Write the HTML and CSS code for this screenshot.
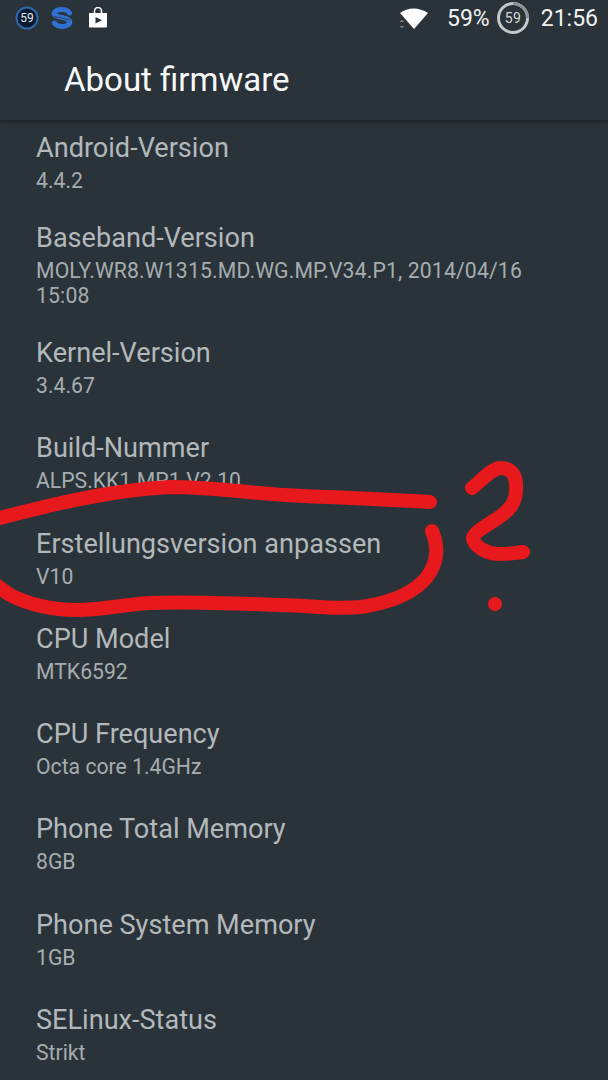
FILE: index.html
```html
<!DOCTYPE html>
<html lang="en">
<head>
  <meta charset="UTF-8">
  <title>About firmware</title>
  <link rel="stylesheet" href="styles.css">
</head>
<body>

  <div class="status-bar">
    <div class="status-left">
      <svg class="icon-badge" width="24" height="24" viewBox="0 0 24 24">
        <circle cx="12" cy="12" r="10.500" fill="#0a1a33" stroke="#2c6aa8" stroke-width="2"/>
        <text x="12" y="16.200" text-anchor="middle" class="badge-text">59</text>
      </svg>
      <svg class="icon-s" width="24" height="24" viewBox="0 0 24 24">
        <path d="M19.500 7C17 2.500 7 2.500 4.500 6.500C3 10 8 10.500 12 11.500C16 12.500 21 13.500 19.500 17.500C17 21.500 7 21.500 4.500 17" fill="none" stroke="#2f72d4" stroke-width="5" stroke-linecap="round"/>
        <path d="M4 10.500C9 11.500 15 12.500 20 14" fill="none" stroke="#2a3339" stroke-width="0.800"/>
      </svg>
      <svg class="icon-bag" width="20" height="22" viewBox="0 0 20 22">
        <path d="M1 6h18v13.500a1 1 0 0 1-1 1H2a1 1 0 0 1-1-1z" fill="#fff"/>
        <path d="M6.500 6V4a3.500 3.500 0 0 1 7 0v2" fill="none" stroke="#fff" stroke-width="1.600"/>
        <path d="M7.500 10l6.500 3.300-6.500 3.300z" fill="#2a3339"/>
      </svg>
    </div>
    <div class="status-right">
      <svg class="icon-wifi" width="30" height="24" viewBox="0 0 30 24">
        <path d="M1 7C9 1 20 1 29 7L15 23z" fill="#fff"/>
        <path d="M1.500 16l1.500-1.500 1.500 1.500M1.500 20l1.500 1.500 1.500-1.500" fill="none" stroke="#c9d0d2" stroke-width="0.900"/>
      </svg>
      <span class="status-text battery">59%</span>
      <svg class="icon-ring" width="34" height="34" viewBox="0 0 34 34">
        <circle cx="17" cy="17" r="14.500" fill="none" stroke="#c4c8c8" stroke-width="3"/>
        <path d="M17 2.500A14.500 14.500 0 0 1 31.500 17" fill="none" stroke="#8d9497" stroke-width="3"/>
        <text x="17" y="21.500" text-anchor="middle" class="ring-text">59</text>
      </svg>
      <span class="status-text clock">21:56</span>
    </div>
  </div>

  <div class="toolbar">
    <h1>About firmware</h1>
  </div>

  <div class="list">
    <div class="item item-tight">
      <div class="item-title">Android-Version</div>
      <div class="item-value">4.4.2</div>
    </div>
    <div class="item item-tight">
      <div class="item-title">Baseband-Version</div>
      <div class="item-value item-value-long">MOLY.WR8.W1315.MD.WG.MP.V34.P1, 2014/04/16 15:08</div>
    </div>
    <div class="item">
      <div class="item-title">Kernel-Version</div>
      <div class="item-value">3.4.67</div>
    </div>
    <div class="item">
      <div class="item-title">Build-Nummer</div>
      <div class="item-value">ALPS.KK1.MP1.V2.10</div>
    </div>
    <div class="item">
      <div class="item-title">Erstellungsversion anpassen</div>
      <div class="item-value">V10</div>
    </div>
    <div class="item">
      <div class="item-title">CPU Model</div>
      <div class="item-value">MTK6592</div>
    </div>
    <div class="item">
      <div class="item-title">CPU Frequency</div>
      <div class="item-value">Octa core 1.4GHz</div>
    </div>
    <div class="item">
      <div class="item-title">Phone Total Memory</div>
      <div class="item-value">8GB</div>
    </div>
    <div class="item">
      <div class="item-title">Phone System Memory</div>
      <div class="item-value">1GB</div>
    </div>
    <div class="item">
      <div class="item-title">SELinux-Status</div>
      <div class="item-value">Strikt</div>
    </div>
  </div>

  <!-- Red marker drawn over the screenshot -->
  <svg class="scribble" width="608" height="1080" viewBox="0 0 608 1080">
    <g fill="none" stroke="#e8191c" stroke-linecap="round" stroke-linejoin="round" stroke-width="14">
      <path d="M-4 519C50 505 110 490 170 487C220 487 260 495 304 496C350 498 400 500 430 502"/>
      <path d="M432 531C440 550 436 565 427 577C415 592 395 602 361 607C340 609 320 607 304 606C250 604 190 601 150 603C120 605 100 610 77 610C50 610 30 605 10 595L-4 585"/>
      <path d="M472 488C482 480 492 468 501 468C512 468 517 476 516 490C516 502 510 510 498 518C488 525 474 532 473 538C474 546 486 554 500 554C508 554 516 553 523 552"/>
    </g>
    <circle cx="495" cy="604" r="7" fill="#e8191c"/>
  </svg>

</body>
</html>
```

FILE: styles.css
```css
* {
  box-sizing: border-box;
}

body {
  margin: 0;
  width: 608px;
  height: 1080px;
  overflow: hidden;
  position: relative;
  background-color: #2a3339;
  font-family: 'Roboto', sans-serif;
}

/* Status bar */
.status-bar {
  height: 36px;
  display: flex;
  align-items: center;
  justify-content: space-between;
  padding: 0 10px 0 15px;
}

.status-left {
  display: flex;
  align-items: center;
  gap: 11px;
}

.status-right {
  display: flex;
  align-items: center;
}

.status-text {
  color: #f0f2f2;
  font-size: 23px;
}

.icon-bag {
  margin-left: 3px;
}

.icon-wifi {
  margin-right: 18px;
}

.icon-ring {
  margin: 0 11px 0 6px;
}

.badge-text {
  fill: #e4e9ef;
  font-size: 12px;
  font-family: 'Roboto', sans-serif;
}

.ring-text {
  fill: #d8d8d8;
  font-size: 14px;
  letter-spacing: 0.5px;
  font-family: 'Roboto', sans-serif;
}

/* Toolbar */
.toolbar {
  height: 84px;
  padding: 24px 0 0 64px;
  box-shadow: 0 2px 3px rgba(0, 0, 0, 0.3);
}

h1 {
  margin: 0;
  color: #f6f8f8;
  font-size: 33px;
  font-weight: 400;
  line-height: 40px;
}

/* List */
.list {
  padding: 10px 50px 0 36px;
}

.item {
  padding-bottom: 32.300px;
}

.item-tight {
  padding-bottom: 27px;
}

.item-title {
  color: #b3b9bb;
  font-size: 27.100px;
  line-height: 36px;
}

.item-value {
  color: #a6adb0;
  font-size: 21.200px;
  line-height: 25px;
  margin-top: 2px;
}

.item-value-long {
  letter-spacing: 0.150px;
}

.scribble {
  position: absolute;
  left: 0;
  top: 0;
}
```
